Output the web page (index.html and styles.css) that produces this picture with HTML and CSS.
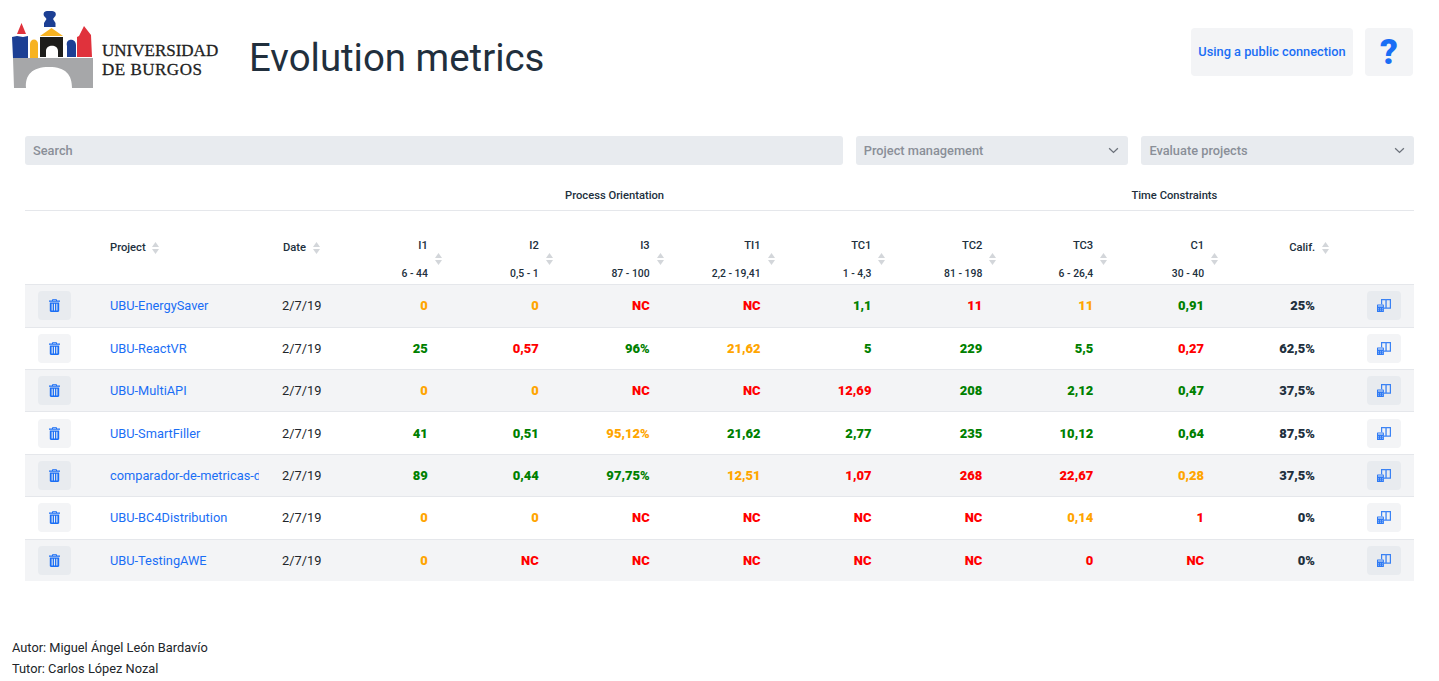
FILE: index.html
```html
<!DOCTYPE html>
<html lang="en">
<head>
<meta charset="UTF-8">
<meta name="viewport" content="width=device-width, initial-scale=1.0">
<title>Evolution metrics</title>
<link rel="stylesheet" href="styles.css">
</head>
<body>

<svg class="defs" width="0" height="0">
  <symbol id="sort" viewBox="0 0 7 12">
    <path d="M3.5 0 7 5H0Z"/>
    <path d="M3.5 12 0 7H7Z"/>
  </symbol>
  <symbol id="trash" viewBox="0 0 11 13">
    <path fill-rule="evenodd" d="M3.6 0H7.4L8.1 1.5H11V2.8H0V1.5H2.9ZM4.2 0.8 3.9 1.5H7.1L6.8 0.8ZM0.8 3.4H10.2V11.8C10.2 12.5 9.7 13 9 13H2C1.3 13 0.8 12.5 0.8 11.8ZM2.6 4.8V11.6H3.7V4.8ZM4.95 4.8V11.6H6.05V4.8ZM7.3 4.8V11.6H8.4V4.8Z"/>
  </symbol>
  <symbol id="compare" viewBox="0 0 14 13">
    <path fill-rule="evenodd" opacity="0.85" d="M4 0H8.8L9 0.4 9.2 0H14V9.8H7V8.4H12.8V1.2H9.7V8.4H8.4V1.2H5.2V5.2H4Z"/>
    <path fill-rule="evenodd" opacity="0.9" d="M0.5 5.6H6.3C6.6 5.6 6.9 5.9 6.9 6.2V12.4C6.9 12.7 6.6 13 6.3 13H0.5C0.2 13 0 12.7 0 12.4V6.2C0 5.9 0.2 5.6 0.5 5.6ZM1 6.6V7.6H5.9V6.6ZM1 9V9.6H1.8V9ZM3 9V9.6H3.8V9ZM5 9V9.6H5.8V9ZM1 10.8V11.4H1.8V10.8ZM3 10.8V11.4H3.8V10.8ZM5 10.8V11.4H5.8V10.8Z"/>
  </symbol>
</svg>

<header class="top">
  <div class="brand">
    <svg class="shield" viewBox="0 0 84 80" width="84" height="80">
      <path fill="#a6a7a9" d="M1 48H81V78H60C60 65 54 57 37 57C20 57 13 65 14 78H2Z"/>
      <path fill="#1c3f94" d="M0 27 5 26 11 27 16 26V48H1Z"/>
      <path fill="#e0323c" d="M9.5 13 14 24H5Z"/>
      <path fill="#f7b322" d="M18 48V34C18 28 26 28 26 34V48Z"/>
      <path fill="#1d1d1b" d="M28 27H51V47H46V41C46 34 34 34 34 41V47H28Z"/>
      <path fill="#f7b322" d="M39.5 18 51 26H28Z"/>
      <path fill="#1c3f94" d="M35 1H40C44 1 45 5 42.5 7L41 9 43.5 13V17H32V13L34.5 9 33 7C30.5 5 31.5 1 35 1Z"/>
      <path fill="#1c3f94" d="M55 47V36C53 28 64 28 64 35V47Z"/>
      <path fill="#e0323c" d="M65 27 67 26 72 16 79 25 80 47H65Z"/>
    </svg>
    <div class="brand-name">UNIVERSIDAD<br><span>DE BURGOS</span></div>
  </div>
  <h1>Evolution metrics</h1>
  <a class="top-btn conn" href="#">Using a public connection</a>
  <a class="top-btn help" href="#">?</a>
</header>

<main>
  <div class="filters">
    <input class="field search" type="text" placeholder="Search">
    <div class="field pick">Project management
      <svg viewBox="0 0 12 8" width="11" height="7"><path d="M1 1.5 6 6.2 11 1.5"/></svg>
    </div>
    <div class="field pick">Evaluate projects
      <svg viewBox="0 0 12 8" width="11" height="7"><path d="M1 1.5 6 6.2 11 1.5"/></svg>
    </div>
  </div>

  <table class="metrics">
    <colgroup>
      <col class="c-del"><col class="c-name"><col class="c-date">
      <col class="c-num" span="9"><col>
    </colgroup>
    <thead>
      <tr class="groups">
        <th colspan="3"></th>
        <th colspan="5" class="g-process">Process Orientation</th>
        <th colspan="5" class="g-time">Time Constraints</th>
      </tr>
      <tr class="heads">
        <th></th>
        <th class="plain">Project <svg class="sort"><use href="#sort"/></svg></th>
        <th class="plain th-date">Date <svg class="sort"><use href="#sort"/></svg></th>
        <th><div class="mh"><span>I1</span><svg class="sort"><use href="#sort"/></svg><small>6 - 44</small></div></th>
        <th><div class="mh"><span>I2</span><svg class="sort"><use href="#sort"/></svg><small>0,5 - 1</small></div></th>
        <th><div class="mh"><span>I3</span><svg class="sort"><use href="#sort"/></svg><small>87 - 100</small></div></th>
        <th><div class="mh"><span>TI1</span><svg class="sort"><use href="#sort"/></svg><small>2,2 - 19,41</small></div></th>
        <th><div class="mh"><span>TC1</span><svg class="sort"><use href="#sort"/></svg><small>1 - 4,3</small></div></th>
        <th><div class="mh"><span>TC2</span><svg class="sort"><use href="#sort"/></svg><small>81 - 198</small></div></th>
        <th><div class="mh"><span>TC3</span><svg class="sort"><use href="#sort"/></svg><small>6 - 26,4</small></div></th>
        <th><div class="mh"><span>C1</span><svg class="sort"><use href="#sort"/></svg><small>30 - 40</small></div></th>
        <th class="plain right">Calif. <svg class="sort"><use href="#sort"/></svg></th>
        <th></th>
      </tr>
    </thead>
    <tbody>
      <tr>
        <td class="del"><button class="ico"><svg><use href="#trash"/></svg></button></td>
        <td class="name"><a href="#">UBU-EnergySaver</a></td><td>2/7/19</td>
        <td class="v o">0</td><td class="v o">0</td><td class="v r">NC</td><td class="v r">NC</td>
        <td class="v g">1,1</td><td class="v r">11</td><td class="v o">11</td><td class="v g">0,91</td>
        <td class="v cal">25%</td>
        <td class="act"><button class="ico cmp"><svg><use href="#compare"/></svg></button></td>
      </tr>
      <tr>
        <td class="del"><button class="ico"><svg><use href="#trash"/></svg></button></td>
        <td class="name"><a href="#">UBU-ReactVR</a></td><td>2/7/19</td>
        <td class="v g">25</td><td class="v r">0,57</td><td class="v g">96%</td><td class="v o">21,62</td>
        <td class="v g">5</td><td class="v g">229</td><td class="v g">5,5</td><td class="v r">0,27</td>
        <td class="v cal">62,5%</td>
        <td class="act"><button class="ico cmp"><svg><use href="#compare"/></svg></button></td>
      </tr>
      <tr>
        <td class="del"><button class="ico"><svg><use href="#trash"/></svg></button></td>
        <td class="name"><a href="#">UBU-MultiAPI</a></td><td>2/7/19</td>
        <td class="v o">0</td><td class="v o">0</td><td class="v r">NC</td><td class="v r">NC</td>
        <td class="v r">12,69</td><td class="v g">208</td><td class="v g">2,12</td><td class="v g">0,47</td>
        <td class="v cal">37,5%</td>
        <td class="act"><button class="ico cmp"><svg><use href="#compare"/></svg></button></td>
      </tr>
      <tr>
        <td class="del"><button class="ico"><svg><use href="#trash"/></svg></button></td>
        <td class="name"><a href="#">UBU-SmartFiller</a></td><td>2/7/19</td>
        <td class="v g">41</td><td class="v g">0,51</td><td class="v o">95,12%</td><td class="v g">21,62</td>
        <td class="v g">2,77</td><td class="v g">235</td><td class="v g">10,12</td><td class="v g">0,64</td>
        <td class="v cal">87,5%</td>
        <td class="act"><button class="ico cmp"><svg><use href="#compare"/></svg></button></td>
      </tr>
      <tr>
        <td class="del"><button class="ico"><svg><use href="#trash"/></svg></button></td>
        <td class="name"><a href="#">comparador-de-metricas-de-evolucion</a></td><td>2/7/19</td>
        <td class="v g">89</td><td class="v g">0,44</td><td class="v g">97,75%</td><td class="v o">12,51</td>
        <td class="v r">1,07</td><td class="v r">268</td><td class="v r">22,67</td><td class="v o">0,28</td>
        <td class="v cal">37,5%</td>
        <td class="act"><button class="ico cmp"><svg><use href="#compare"/></svg></button></td>
      </tr>
      <tr>
        <td class="del"><button class="ico"><svg><use href="#trash"/></svg></button></td>
        <td class="name"><a href="#">UBU-BC4Distribution</a></td><td>2/7/19</td>
        <td class="v o">0</td><td class="v o">0</td><td class="v r">NC</td><td class="v r">NC</td>
        <td class="v r">NC</td><td class="v r">NC</td><td class="v o">0,14</td><td class="v r">1</td>
        <td class="v cal">0%</td>
        <td class="act"><button class="ico cmp"><svg><use href="#compare"/></svg></button></td>
      </tr>
      <tr>
        <td class="del"><button class="ico"><svg><use href="#trash"/></svg></button></td>
        <td class="name"><a href="#">UBU-TestingAWE</a></td><td>2/7/19</td>
        <td class="v o">0</td><td class="v r">NC</td><td class="v r">NC</td><td class="v r">NC</td>
        <td class="v r">NC</td><td class="v r">NC</td><td class="v r">0</td><td class="v r">NC</td>
        <td class="v cal">0%</td>
        <td class="act"><button class="ico cmp"><svg><use href="#compare"/></svg></button></td>
      </tr>
    </tbody>
  </table>
</main>

<footer class="credits">
  <div>Autor: Miguel Ángel León Bardavío</div>
  <div>Tutor: Carlos López Nozal</div>
</footer>

</body>
</html>
```

FILE: styles.css
```css
/* Evolution metrics page */
body {
  margin: 0;
  background-color: #fff;
  color: #212529;
  font-family: Roboto, "Liberation Sans", sans-serif;
  font-size: 12.8px;
  overflow: hidden;
}
a {
  color: #1a6ef5;
  text-decoration: none;
}
.defs {
  display: block;
  height: 0;
}

/* top bar */
.top {
  display: flex;
  align-items: center;
  height: 96px;
  padding: 8px 26px 0 12px;
  box-sizing: border-box;
}
.brand {
  display: flex;
  align-items: flex-end;
  gap: 6px;
  width: 237px;
}
.shield { margin: -2px 0 2px; }
.brand-name {
  font-family: "Liberation Serif", serif;
  font-size: 17px;
  line-height: 19px;
  -webkit-text-stroke: 0.3px #222;
  padding-bottom: 13px;
  color: #222;
}
.brand-name span {
  letter-spacing: 0.5px;
}
h1 {
  flex: 1;
  margin: 12px 0 0;
  font-size: 38.4px;
  font-weight: 400;
  line-height: 48px;
  color: #212f3d;
}
.top-btn {
  display: flex;
  align-items: center;
  justify-content: center;
  height: 48px;
  border-radius: 4px;
  background-color: #f3f4f6;
}
.conn {
  width: 162px;
  padding-bottom: 2px;
  box-sizing: border-box;
  font-weight: 500;
}
.help {
  width: 48px;
  margin-left: 12px;
  font-size: 35px;
  font-weight: 900;
}

/* filters */
main {
  padding: 40px 25px 0;
}
.filters {
  display: grid;
  grid-template-columns: 3fr 1fr 1fr;
  gap: 13px;
}
.field {
  box-sizing: border-box;
  height: 29px;
  border: 0;
  border-radius: 3px;
  background-color: #e8ebef;
  color: #8a8f98;
  font-family: inherit;
  font-size: 12.8px;
  font-weight: 500;
}
.search {
  width: 100%;
  min-width: 0;
  padding: 0 8px;
}
.search::placeholder {
  color: #8a8f98;
  opacity: 1;
}
.pick {
  display: flex;
  align-items: center;
  justify-content: space-between;
  padding: 0 9px 0 8px;
}
.pick svg {
  fill: none;
  stroke: #6c727b;
  stroke-width: 1.5;
}

/* table */
.metrics {
  width: 100%;
  margin-top: 16px;
  border-collapse: collapse;
  table-layout: fixed;
}
.c-del { width: 73px; }
.c-name { width: 172px; }
.c-date { width: 59px; }
.c-num { width: 110.9px; }

th {
  font-size: 11.2px;
  font-weight: 500;
  text-align: left;
  padding: 0;
  color: #212f3d;
}
.groups th {
  height: 29px;
  border-bottom: 1px solid #e5e7eb;
}
.g-process { padding-left: 236px; }
.g-time { padding-left: 248px; }

.heads th {
  height: 74.2px;
  box-sizing: border-box;
  border-bottom: 1px solid #e5e7eb;
  vertical-align: bottom;
  padding-bottom: 3px;
}
.heads .plain {
  padding: 0 12px;
  vertical-align: middle;
  white-space: nowrap;
}
.heads .th-date { padding-left: 13px; }
.heads .right {
  text-align: right;
  padding-right: 0;
}
.sort {
  width: 7px;
  height: 12px;
  fill: #d3d6da;
  vertical-align: middle;
  margin-left: 4px;
}
.right .sort { margin-right: -2px; }
/* metric header: name, arrows one line lower, range under the name */
.mh {
  display: grid;
  grid-template-columns: auto 7px;
  grid-template-rows: 13px 13px 16px;
  column-gap: 7px;
  justify-content: end;
  justify-items: end;
  align-items: center;
  margin-right: -2px;
}
.mh span { grid-area: 1 / 1; }
.mh svg { grid-area: 2 / 2; margin: 0; }
.mh small {
  grid-area: 3 / 1;
  font-size: 10.4px;
  font-weight: 500;
  white-space: nowrap;
}

td {
  height: 42.4px;
  padding: 0 12px;
  box-sizing: border-box;
  border-bottom: 1px solid #e5e7eb;
}
tbody tr:nth-child(odd) { background-color: #f3f4f6; }
tbody tr:last-child td { border-bottom: 0; }
.del { padding-left: 13px; }
.name { padding-right: 11px; }
.name a {
  display: block;
  overflow: hidden;
  white-space: nowrap;
}
.v {
  text-align: right;
  font-size: 13px;
  font-weight: 900;
}
.o { color: #ffa500; }
.r { color: #ff0000; }
.g { color: #008000; }
.cal { color: #212f3d; }
.act {
  padding-right: 13px;
  text-align: right;
}

.ico {
  display: block;
  width: 33px;
  height: 29px;
  padding: 0;
  border: 0;
  border-radius: 4px;
  background-color: #f3f4f6;
  fill: #1a6ef5;
}
tbody tr:nth-child(odd) .ico { background-color: #e8ebef; }
.ico svg {
  display: block;
  width: 11px;
  height: 13px;
  margin: auto;
}
.cmp {
  width: 34px;
  margin-left: auto;
}
.cmp svg {
  width: 14px;
  height: 13px;
}

.credits {
  margin: 56px 0 0 12px;
  line-height: 21px;
}
```
